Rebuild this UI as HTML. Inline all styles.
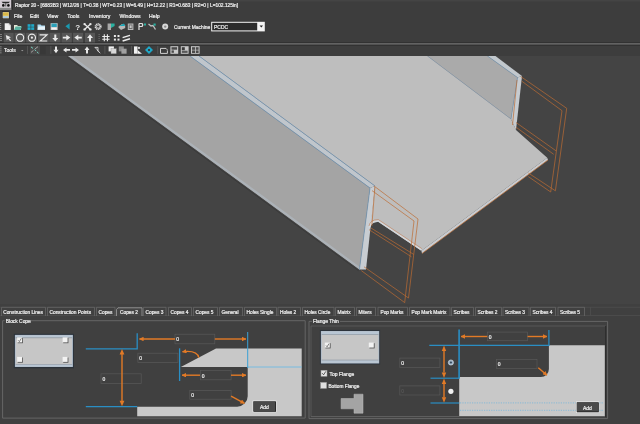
<!DOCTYPE html>
<html><head><meta charset="utf-8"><style>
html,body{margin:0;padding:0}
body{width:640px;height:424px;overflow:hidden;background:#404040;position:relative;font-family:"Liberation Sans",sans-serif}
svg{position:absolute;left:0;top:0;will-change:transform}
text{font-family:"Liberation Sans",sans-serif}
.t{fill:#ededed;stroke:#ededed;stroke-width:0.22}
</style></head><body>
<svg width="640" height="424" viewBox="0 0 640 424">
<defs>
<marker id="ah" viewBox="0 0 10 10" refX="9" refY="5" markerWidth="3.2" markerHeight="3.2" orient="auto-start-reverse"><path d="M0,0 L10,5 L0,10 Z" fill="#e27a26"/></marker>
</defs>
<!-- chrome -->
<rect x="0" y="0" width="640" height="56" fill="#3d3d3d"/>
<rect x="0" y="0" width="640" height="1.5" fill="#444444"/>
<rect x="0" y="42.4" width="640" height="0.9" fill="#2c2c2c"/>
<rect x="0" y="43.3" width="640" height="1.4" fill="#767676"/>
<rect x="0" y="44.7" width="640" height="0.9" fill="#2c2c2c"/>
<!-- title icon -->
<rect x="0" y="0" width="11.5" height="9.5" fill="#d4ccd4"/>
<rect x="0" y="7.8" width="11.5" height="1.7" fill="#8a8a8a"/>
<path d="M1.5,1.8 H10 L8.5,3.2 H3 Z" fill="#2a2a2a"/>
<circle cx="3.3" cy="5.4" r="1.3" fill="#101010"/><circle cx="8.4" cy="5.4" r="1.3" fill="#101010"/>
<rect x="5.2" y="3" width="1.1" height="3.5" fill="#5a5a5a"/>
<rect x="11.5" y="0" width="1" height="9.5" fill="#1a1a1a"/>
<text x="15" y="7" font-size="4.85" class="t">Raptor 20 - [6883B3 | W12/26 | T=0.38 | WT=0.23 | W=6.49 | H=12.22 | R1=0.683 | R2=0 | L=102.125in]</text>
<!-- menu -->
<rect x="2" y="11.5" width="7.5" height="7.5" fill="#1e1e2a"/>
<rect x="2.6" y="12.1" width="6.3" height="6.3" fill="#e8dca0"/>
<rect x="3" y="12.5" width="5.5" height="3.2" fill="#d8b848"/>
<rect x="3" y="16.2" width="5.5" height="1.8" fill="#a8c8e0"/>
<g font-size="5.2" class="t">
<text x="14" y="17.6">File</text><text x="30" y="17.6">Edit</text><text x="47" y="17.6">View</text><text x="67.3" y="17.6">Tools</text><text x="89" y="17.6">Inventory</text><text x="119.5" y="17.6">Windows</text><text x="149" y="17.6">Help</text>
</g>
<!-- toolbar 1 -->
<g fill="#8a8a8a"><rect x="0" y="23" width="1.2" height="1"/><rect x="0" y="25" width="1.2" height="1"/><rect x="0" y="27" width="1.2" height="1"/><rect x="0" y="29" width="1.2" height="1"/></g>
<path d="M4.7,23.2 H8.8 L10.8,25.2 V30 H4.7 Z" fill="#f0f0f0"/><path d="M8.8,23.2 V25.2 H10.8" fill="#b0b0b0"/>
<path d="M14,25 H17 L18,26 H21 V30 H14 Z" fill="#e8e8d8"/><path d="M15.5,26.5 H22 L20.5,30 H14 Z" fill="#5ab0a0"/>
<g fill="#1ea8c8"><rect x="27.6" y="24.2" width="3" height="2.6"/><rect x="31.2" y="24.2" width="3" height="2.6"/><rect x="27.6" y="27.3" width="3" height="2.6"/><rect x="31.2" y="27.3" width="3" height="2.6"/></g>
<path d="M37.5,24.6 H40.5 L41.5,25.6 H45 V29.8 H37.5 Z" fill="#a8d8f0"/><path d="M38.5,26.5 H45 V29.8 H37.5 Z" fill="#e8f4fa"/>
<rect x="50.6" y="23.2" width="7" height="6.8" fill="#d0d0d0"/><rect x="51.4" y="23.6" width="5.4" height="3.4" fill="#2aa0b8"/><rect x="51.6" y="27.8" width="5" height="1.6" fill="#f4f4f4"/>
<path d="M69.6,23.2 V29.5 L65.4,26.35 Z" fill="#1a9ab0"/>
<text x="75.2" y="30" font-size="8" font-weight="bold" fill="#e8e8e8">?</text>
<path d="M85,24.5 L90,29 M90,24.5 L85,29" stroke="#e8e8e8" stroke-width="1.3"/><g fill="#e8e8e8"><circle cx="84.6" cy="24.1" r="1.2"/><circle cx="90.4" cy="24.1" r="1.2"/><circle cx="84.6" cy="29.4" r="1.2"/><circle cx="90.4" cy="29.4" r="1.2"/></g>
<circle cx="98.1" cy="26.6" r="2.7" fill="none" stroke="#e0e0e0" stroke-width="1.6" stroke-dasharray="1.1,0.6"/>
<circle cx="98.1" cy="26.6" r="1.6" fill="none" stroke="#e0e0e0" stroke-width="0.8"/>
<path d="M107.6,23.5 H111 V30 H107.6 Z" fill="#a8a8a8"/><path d="M111,23.5 H114.6 V26 L111,28 Z" fill="#2ab0a0"/>
<path d="M118.1,27 L122,24 L125.2,25 V28 L121,30 Z" fill="#b8b8b8"/><path d="M119,26 L124,23.5 L125,26 Z" fill="#1aa8b8"/>
<rect x="127.8" y="23.5" width="5.6" height="6.5" fill="#b8b8b8"/><rect x="128.8" y="24.5" width="3.6" height="4.5" fill="#6a6a6a"/><rect x="129.6" y="25.4" width="2" height="2.6" fill="#c8c8c8"/>
<path d="M139,23.5 V30 M139,23.5 H142 Q143.5,25 142,26.5 H139" stroke="#e0e0e0" stroke-width="1.2" fill="none"/><rect x="144" y="23.5" width="2" height="2" fill="#2ab0a0"/>
<path d="M148.5,24 L151,26 L153,25.5 L155.5,29.5" stroke="#c0c0c0" stroke-width="1.3" fill="none"/><rect x="153.5" y="23.5" width="2.2" height="2.2" fill="#2ab0a0"/>
<circle cx="165.2" cy="26.6" r="3" fill="#d8d8d8"/><circle cx="165.2" cy="26.6" r="1.2" fill="#8a8a8a"/>
<text x="174" y="28.7" font-size="4.9" class="t">Current Machine</text>
<rect x="211.2" y="21.8" width="53.6" height="9.6" fill="#f4f4f4"/>
<rect x="212.2" y="22.8" width="45" height="7.6" fill="#2c2c2c"/>
<text x="214" y="28.6" font-size="5" class="t">PCDC</text>
<path d="M259.6,25.6 H263 L261.3,27.6 Z" fill="#202020"/>
<!-- toolbar 2 -->
<g fill="#8a8a8a"><rect x="0" y="34" width="2" height="0.9"/><rect x="0" y="36" width="2" height="0.9"/><rect x="0" y="38" width="2" height="0.9"/><rect x="0" y="40" width="2" height="0.9"/></g>
<g fill="#565656">
<rect x="3.8" y="32.8" width="9.8" height="9.6"/><rect x="14.6" y="32.8" width="10.6" height="9.6"/><rect x="26.2" y="32.8" width="10.8" height="9.6"/><rect x="38" y="32.8" width="10.7" height="9.6"/>
<rect x="49.4" y="32.8" width="11" height="9.6"/><rect x="61.6" y="32.8" width="10.2" height="9.6"/><rect x="73.1" y="32.8" width="10" height="9.6"/><rect x="85" y="32.8" width="10" height="9.6"/>
</g>
<path d="M5.8,35 L11,37.2 L9,38 L11.2,40.5 L10.2,41.2 L8,38.8 L6.8,40.6 Z" fill="#e8e8e8"/>
<circle cx="20.1" cy="37.7" r="3.6" fill="none" stroke="#ececec" stroke-width="1.1"/>
<circle cx="31.9" cy="37.7" r="3.6" fill="none" stroke="#ececec" stroke-width="1.1"/><circle cx="31.9" cy="37.7" r="1.1" fill="#ececec"/>
<path d="M39.6,34.9 H47 L40.2,41 H47.2" stroke="#ececec" stroke-width="1.1" fill="none"/>
<path d="M54.3,34.5 H56.3 V38 H58.3 L55.3,41.5 L52.3,38 H54.3 Z" fill="#e8e8e8"/>
<path d="M62.8,36.7 H66.3 V34.7 L70.3,37.6 L66.3,40.5 V38.5 H62.8 Z" fill="#e8e8e8"/>
<path d="M81.8,36.7 H78.3 V34.7 L74.3,37.6 L78.3,40.5 V38.5 H81.8 Z" fill="#e8e8e8"/>
<path d="M89,41.5 H91 V38 H93 L90,34.2 L87,38 H89 Z" fill="#e8e8e8"/>
<g fill="#777"><rect x="98.6" y="34" width="1" height="1"/><rect x="98.6" y="36" width="1" height="1"/><rect x="98.6" y="38" width="1" height="1"/><rect x="98.6" y="40" width="1" height="1"/></g>
<path d="M104.3,34.3 V41.2 M107.4,34.3 V41.2 M102.2,36.5 H109.6 M102.2,39.2 H109.6" stroke="#ececec" stroke-width="1.1"/>
<g fill="#ececec"><rect x="113.9" y="35" width="2" height="2"/><rect x="117.5" y="35" width="2" height="2"/><rect x="113.9" y="38.6" width="2" height="2"/><rect x="117.5" y="38.6" width="2" height="2"/></g>
<path d="M122.6,37.6 L130,35.4 M122.6,41 L130,38.8" stroke="#ececec" stroke-width="1.5"/>
<!-- toolbar 3 -->
<g transform="translate(0,-0.6)">
<g fill="#8a8a8a"><rect x="0" y="47" width="1.6" height="0.9"/><rect x="0" y="49" width="1.6" height="0.9"/><rect x="0" y="51" width="1.6" height="0.9"/><rect x="0" y="53" width="1.6" height="0.9"/></g>
<text x="4" y="52.6" font-size="5" class="t">Tools</text>
<path d="M21,50.5 H23.5 L22.25,51.8 Z" fill="#9a9a9a"/>
<rect x="27" y="46.5" width="0.8" height="8" fill="#5a5a5a"/>
<rect x="30" y="46.3" width="10" height="8.6" fill="#4a4a4a"/>
<path d="M31,47.5 L33,49 M34.5,50.2 L36.2,51.5 M37,52.5 L38.5,53.8" stroke="#7ad0c0" stroke-width="1"/><path d="M31,53 L33.5,51 M35,49.5 L38,47.3" stroke="#b8b8b8" stroke-width="0.8"/>
<rect x="40" y="46.3" width="5.8" height="8.6" fill="#383838"/>
<rect x="50.5" y="46.5" width="0.8" height="8" fill="#5a5a5a"/>
<path d="M55,47 H57 V50.3 H58.5 L56,53.8 L53.5,50.3 H55 Z" fill="#e8e8e8"/>
<path d="M70,49.6 H66.5 V48 L63,50.5 L66.5,53 V51.4 H70 Z" fill="#e8e8e8"/>
<path d="M72,49.6 H75.5 V48 L79,50.5 L75.5,53 V51.4 H72 Z" fill="#e8e8e8"/>
<path d="M86,54 H88 V50.5 H89.5 L87,47 L84.5,50.5 H86 Z" fill="#e8e8e8"/>
<path d="M94.8,48 H98 V51 M100.3,53.8 L97,50.8 M95,48 L98.8,52" stroke="#d8d8d8" stroke-width="0.9" fill="none"/>
<rect x="104.5" y="46.5" width="0.8" height="8" fill="#5a5a5a"/>
<rect x="108.6" y="47" width="5.3" height="5" fill="#f0f0f0"/><rect x="111" y="49.3" width="5.3" height="5" fill="#d8d8d8" stroke="#888" stroke-width="0.4"/>
<rect x="118.8" y="47" width="5" height="5" fill="#8a8a8a"/><rect x="121.4" y="49.3" width="5.2" height="5" fill="#a0a0a0"/>
<rect x="131" y="46.5" width="0.8" height="8" fill="#5a5a5a"/>
<path d="M134,47 H137.5 V54.3 H134 Z" fill="#f0f0f0"/><path d="M137.5,50.5 L142,54.3 H137.5 Z" fill="#f4f4f4"/><rect x="138" y="47.5" width="2" height="2" fill="#ccc"/>
<path d="M149,46.6 L153,50.6 L149,54.6 L145,50.6 Z" fill="#1ea8c8"/><rect x="148" y="49.6" width="2" height="2" fill="#3d3d3d"/>
<rect x="157.4" y="46.5" width="0.8" height="8" fill="#5a5a5a"/>
<path d="M160.5,49 H166 L167.4,50.5 M160.5,49 V54 H167.4 V51" stroke="#d0d0d0" stroke-width="1" fill="none"/>
<rect x="170.4" y="46.8" width="7.8" height="7.6" fill="#c8c8c8"/><rect x="171.5" y="47.8" width="5.6" height="2.5" fill="#4a4a4a"/><rect x="171.5" y="51" width="2.4" height="2.4" fill="#4a4a4a"/>
<rect x="180.8" y="46.8" width="7.8" height="7.6" fill="#c8c8c8"/><rect x="181.8" y="47.8" width="3" height="3" fill="#3a3a3a"/><rect x="181.8" y="51.3" width="5.8" height="2.2" fill="#5a5a5a"/>
<rect x="191" y="46.8" width="8.6" height="7.6" fill="#c8c8c8"/><rect x="192" y="47.8" width="3" height="2.6" fill="#4a4a4a"/><rect x="195.8" y="47.8" width="2.8" height="2.6" fill="#4a4a4a"/><rect x="192" y="51" width="3" height="2.6" fill="#4a4a4a"/><rect x="195.8" y="51" width="2.8" height="2.6" fill="#4a4a4a"/>
</g>
<!-- viewport -->
<clipPath id="vp"><rect x="0" y="56" width="640" height="248"/></clipPath>
<rect x="0" y="56" width="640" height="248" fill="#444444"/>
<g clip-path="url(#vp)">
<!-- near flange outer face -->
<polygon points="68,56 190,56 370,188 359.4,269.6" fill="#a4a4a4"/>
<line x1="67.2" y1="57.1" x2="358.6" y2="270.7" stroke="#3a3a3a" stroke-width="1"/>
<line x1="68.9" y1="55" x2="360.3" y2="268.6" stroke="#acb2b8" stroke-width="2.2"/>
<!-- web face -->
<path d="M199,56 H427.5 L511,119 L516,130 L547.2,157.7 L421.4,250.8 L378.5,222 Q371,221.5 369.6,229 L375,186 Z" fill="#bebebe"/>
<!-- far flange inner -->
<polygon points="427.5,56 487.5,56 517.5,77.5 511,119" fill="#aaaaaa"/>
<polygon points="487.5,56 495.5,56 522,76 517.5,77.5" fill="#c2c8cd"/>
<polygon points="517.5,77.5 522,76 516,130 511,119" fill="#c6cbd0"/>
<line x1="427.5" y1="56" x2="511" y2="119" stroke="#8aa0b5" stroke-width="0.6"/>
<line x1="487.5" y1="56" x2="517.5" y2="77.5" stroke="#6f93b3" stroke-width="0.6"/>
<line x1="517.5" y1="77.5" x2="511" y2="119" stroke="#6f93b3" stroke-width="0.6"/>
<!-- near flange strips -->
<polygon points="190,56 199,56 375,186 370,188" fill="#c0c6cc"/>
<line x1="190" y1="56" x2="370" y2="188" stroke="#6a90b2" stroke-width="0.7"/>
<line x1="199" y1="56" x2="375" y2="186" stroke="#6a90b2" stroke-width="0.7"/>
<polygon points="370,188 375,186 366,269.6 359.4,269.6" fill="#c8cdd2"/>
<line x1="370" y1="188" x2="359.4" y2="269.6" stroke="#6a90b2" stroke-width="0.7"/>
<!-- cope edge strip -->
<path d="M369.4,227.6 Q370.6,220.6 378.3,220.8 L421.4,249.8" fill="none" stroke="#d4d8dc" stroke-width="1.8"/>
<path d="M369,226 Q370,219.6 378.3,219.6 L421.8,248.6" fill="none" stroke="#c07040" stroke-width="0.5"/>
<!-- web front edge -->
<polygon points="421.4,250.8 547.2,157.7 548,160 422,253.5" fill="#c9ccd0"/>
<!-- orange wireframes -->
<g stroke="#bd6c32" stroke-width="0.7" fill="none">
<polyline points="374,186 418,219 408.5,298"/>
<polyline points="372,190.6 414,221 404.7,302.6"/>
<line x1="364" y1="266.8" x2="408.5" y2="298"/>
<line x1="361.3" y1="270.6" x2="404.7" y2="302.6"/>
<line x1="369.1" y1="229.7" x2="411.5" y2="256.8"/>
<line x1="370.8" y1="227.9" x2="413.9" y2="254.5"/>
<line x1="374.9" y1="187" x2="371.8" y2="226"/>
<line x1="422" y1="253.5" x2="548" y2="160"/>
<polyline points="520.7,76.5 566.7,108.3 555.4,190.8"/>
<polyline points="521.8,81.2 562,110.7 550.7,192"/>
<line x1="516" y1="122.5" x2="556" y2="150.8"/>
<line x1="516" y1="127.2" x2="553.7" y2="154.3"/>
<line x1="517" y1="80" x2="512.5" y2="125"/>
<line x1="528.3" y1="173" x2="555.4" y2="190.8"/>
<line x1="528.3" y1="176.6" x2="550.7" y2="192"/>
</g>
</g>
<!-- bottom panel -->
<rect x="0" y="304" width="640" height="120" fill="#404040"/>
<!-- tabs -->
<rect x="0" y="306.8" width="640" height="0.8" fill="#4e4e4e"/>
<rect x="0" y="315.2" width="640" height="0.8" fill="#4e4e4e"/>
<rect x="590" y="307" width="0.8" height="8.5" fill="#4e4e4e"/>
<g fill="none" stroke="#666666" stroke-width="0.8">
<path d="M1.5,316 V307.3 H45.5 V316"/>
<path d="M47.5,316 V307.3 H94.5 V316"/>
<path d="M96.5,316 V307.3 H115 V316"/>
<path d="M143.5,316 V307.3 H166 V316"/>
<path d="M168.5,316 V307.3 H191.5 V316"/>
<path d="M193.5,316 V307.3 H217.5 V316"/>
<path d="M219.5,316 V307.3 H242.5 V316"/>
<path d="M244.5,316 V307.3 H276.5 V316"/>
<path d="M278,316 V307.3 H300.5 V316"/>
<path d="M302.5,316 V307.3 H334 V316"/>
<path d="M335.5,316 V307.3 H354.5 V316"/>
<path d="M356.5,316 V307.3 H375.5 V316"/>
<path d="M378,316 V307.3 H407.5 V316"/>
<path d="M409.5,316 V307.3 H450 V316"/>
<path d="M451.5,316 V307.3 H473.5 V316"/>
<path d="M475.5,316 V307.3 H501.5 V316"/>
<path d="M503,316 V307.3 H529 V316"/>
<path d="M530.5,316 V307.3 H555.5 V316"/>
<path d="M558,316 V307.3 H584.5 V316"/>
</g>
<path d="M116.5,316 V309.5 L118,307.8 H142 V316" fill="#454545" stroke="#a0a0a0" stroke-width="0.8"/>
<g font-size="4.8" class="t">
<text x="3.2" y="313.7">Construction Lines</text>
<text x="49.5" y="313.7">Construction Points</text>
<text x="98.5" y="313.7">Copes</text>
<text x="120" y="313.7">Copes 2</text>
<text x="145.5" y="313.7">Copes 3</text>
<text x="170.5" y="313.7">Copes 4</text>
<text x="195.5" y="313.7">Copes 5</text>
<text x="221.5" y="313.7">General</text>
<text x="246.5" y="313.7">Holes Single</text>
<text x="280" y="313.7">Holes 2</text>
<text x="304.5" y="313.7">Holes Circle</text>
<text x="337.5" y="313.7">Matrix</text>
<text x="358.5" y="313.7">Miters</text>
<text x="380.5" y="313.7">Pop Marks</text>
<text x="411.5" y="313.7">Pop Mark Matrix</text>
<text x="453.5" y="313.7">Scribes</text>
<text x="477.5" y="313.7">Scribes 2</text>
<text x="505" y="313.7">Scribes 3</text>
<text x="532.5" y="313.7">Scribes 4</text>
<text x="560" y="313.7">Scribes 5</text>
</g>
<!-- group boxes -->
<g fill="none" stroke="#6a6a6a" stroke-width="0.9">
<path d="M4.5,320.7 H2.6 V418.1 H305.2 V320.7 H31"/>
<path d="M312,321.4 H309 V418.6 H607.6 V321.4 H340"/>
</g>
<path d="M311,416.6 V326 H605.5" fill="none" stroke="#5e5e5e" stroke-width="0.8"/>
<path d="M311,416.6 H605.5" fill="none" stroke="#6a6a6a" stroke-width="0.8"/>
<path d="M605.6,326 V417" fill="none" stroke="#2e2e2e" stroke-width="1.2"/>
<text x="5.8" y="323" font-size="4.9" class="t">Block Cope</text>
<text x="313" y="323.1" font-size="4.9" class="t">Flange Thin</text>
<!-- Block cope widget -->
<rect x="13.8" y="333.8" width="60.2" height="34.5" fill="#2c333b"/>
<rect x="14.9" y="334.9" width="58" height="32.1" fill="#a9bacb"/>
<rect x="15.6" y="335.6" width="56.6" height="30.7" fill="#c6c6c6"/>
<rect x="15.6" y="335.6" width="56.6" height="1.8" fill="#b8c6d4"/>
<rect x="15.6" y="337.4" width="56.6" height="0.8" fill="#8f9aa5"/>
<rect x="15.6" y="364.6" width="56.6" height="1.7" fill="#b8c6d4"/>
<rect x="15.6" y="364.2" width="56.6" height="0.6" fill="#8f9aa5"/>
<rect x="17.7" y="338.0" width="5.2" height="5.2" fill="#505050"/><rect x="17.1" y="337.4" width="5" height="5" fill="#f2f2f2"/><rect x="63.2" y="338.0" width="5.2" height="5.2" fill="#505050"/><rect x="62.6" y="337.4" width="5" height="5" fill="#f2f2f2"/>
<rect x="17.7" y="357.5" width="5.2" height="5.2" fill="#505050"/><rect x="17.1" y="356.9" width="5" height="5" fill="#f2f2f2"/><rect x="63.2" y="357.5" width="5.2" height="5.2" fill="#505050"/><rect x="62.6" y="356.9" width="5" height="5" fill="#f2f2f2"/>
<path d="M18.2,340.3 L19.4,341.6 L21.3,338.4" fill="none" stroke="#333" stroke-width="0.6"/>
<!-- Block cope diagram -->
<path d="M137.2,406.7 H237.2 A10.5,10.5 0 0 0 247.7,396.2 V367 H180.8 L216,348.4 H301.7 V416.2 H137.2 Z" fill="#c8c8c8"/>
<g stroke="#2a8ec4" stroke-width="1.3" fill="none">
<path d="M85.8,348.8 H137.2 V333.2"/>
<path d="M85.8,406.7 H137.2"/>
</g>
<line x1="248" y1="367" x2="301.7" y2="367" stroke="#62b8e6" stroke-width="0.8"/>
<line x1="247.7" y1="332" x2="247.7" y2="368" stroke="#3aa0d4" stroke-width="1"/>
<line x1="179.6" y1="348.3" x2="179.6" y2="381" stroke="#2a8ec4" stroke-width="1.3"/>
<g fill="none" stroke="#585858" stroke-width="0.7">
<rect x="175" y="334.2" width="39.8" height="9.6"/>
<rect x="137.9" y="353.2" width="40" height="9.2"/>
<rect x="101" y="373.8" width="40.2" height="9.6"/>
<rect x="200.3" y="370.6" width="30.8" height="9.2"/>
<rect x="189.8" y="390.4" width="41.3" height="8.8"/>
</g>
<g stroke="#e27a26" stroke-width="1.4" fill="none">
<line x1="122" y1="353" x2="122" y2="402"/>
<line x1="175" y1="339" x2="139.5" y2="339" marker-end="url(#ah)"/>
<line x1="214.8" y1="339" x2="246" y2="339" marker-end="url(#ah)"/>
<line x1="200" y1="375.2" x2="182" y2="375.2" marker-end="url(#ah)"/>
<line x1="231" y1="375.2" x2="246" y2="375.2" marker-end="url(#ah)"/>
<line x1="231.1" y1="396.2" x2="244.5" y2="403.4" marker-end="url(#ah)"/>
<path d="M198.8,357.6 C197.8,352.6 192,350.6 182.5,351.7" marker-end="url(#ah)"/>
</g>
<path d="M122,349 L119.6,354.5 H124.4 Z M122,406.3 L119.6,400.8 H124.4 Z" fill="#e27a26"/>
<g font-size="5" class="t">
<text x="176.3" y="341.3">0</text><text x="139.3" y="360">0</text><text x="102.4" y="380.7">0</text><text x="201.8" y="377.5">0</text><text x="191.3" y="396.8">0</text>
</g>
<rect x="252.6" y="400.6" width="23.8" height="11.6" fill="#f0f0f0"/>
<rect x="253.4" y="401.4" width="22.6" height="10.4" fill="#1e1e1e"/>
<rect x="253.4" y="401.4" width="21.8" height="9.6" fill="#4a4a4a"/>
<text x="260" y="408.6" font-size="5" class="t">Add</text>
<!-- Flange thin widget -->
<rect x="319.9" y="329.9" width="60.2" height="34.5" fill="#2c333b"/>
<rect x="320.9" y="331" width="58.3" height="32.5" fill="#a9bacb"/>
<rect x="321.6" y="331.7" width="56.9" height="31.1" fill="#c6c6c6"/>
<rect x="321.6" y="331.7" width="56.9" height="2.8" fill="#b8c6d4"/>
<rect x="321.6" y="334.3" width="56.9" height="0.7" fill="#8f9aa5"/>
<rect x="321.6" y="360.2" width="56.9" height="2.6" fill="#b8c6d4"/>
<rect x="321.6" y="359.7" width="56.9" height="0.7" fill="#8f9aa5"/>
<rect x="325.4" y="343.2" width="5.2" height="5.2" fill="#505050"/><rect x="324.8" y="342.6" width="5" height="5" fill="#f2f2f2"/><rect x="369.4" y="343.2" width="5.2" height="5.2" fill="#505050"/><rect x="368.8" y="342.6" width="5" height="5" fill="#f2f2f2"/>
<path d="M326,345.5 L327.1,346.8 L329,343.6" fill="none" stroke="#333" stroke-width="0.6"/>
<rect x="321" y="370.3" width="6" height="6" fill="#e4e4e4" stroke="#999" stroke-width="0.5"/>
<path d="M322.2,373.2 L323.6,374.8 L325.8,371.4" fill="none" stroke="#222" stroke-width="0.7"/>
<rect x="320.6" y="382.4" width="6" height="6" fill="#e0e0e0" stroke="#999" stroke-width="0.5"/>
<text x="329.6" y="376" font-size="5" class="t">Top Flange</text>
<text x="328.4" y="388.2" font-size="4.75" class="t">Bottom Flange</text>
<path d="M341.1,398.5 H354 V394.2 H363 V413.2 H354 V408.8 H341.1 Z" fill="#a4a4a4" stroke="#bdbdbd" stroke-width="0.5"/>
<!-- Flange thin diagram -->
<path d="M459.2,345.2 H548.9 V369.1 A8,8 0 0 1 540.9,377.1 H459.2 V416 H604.8 V345.2 Z" fill="#c8c8c8"/>
<g stroke="#2a8ec4" stroke-width="1.2" fill="none">
<line x1="429.3" y1="345.3" x2="549.5" y2="345.3"/>
<line x1="430.5" y1="378.2" x2="459.2" y2="378.2"/>
<line x1="430.5" y1="403" x2="459.2" y2="403"/>
<line x1="459.1" y1="329.5" x2="459.1" y2="378.5" stroke-width="1.6"/>
<line x1="548.9" y1="330" x2="548.9" y2="345.3"/>
</g>
<g stroke="#5aaee0" stroke-width="0.6" stroke-dasharray="1.2,1.2" fill="none">
<line x1="460" y1="402.9" x2="604" y2="402.9"/>
<line x1="460" y1="410.3" x2="604" y2="410.3"/>
</g>
<g fill="none" stroke="#585858" stroke-width="0.7">
<rect x="487.3" y="332.1" width="40.3" height="8.6"/>
<rect x="496.3" y="359.4" width="40.7" height="9.2"/>
<rect x="399.8" y="358.1" width="40.1" height="9.3"/>
<rect x="399.8" y="385.9" width="40.1" height="9.1"/>
</g>
<g stroke="#e27a26" stroke-width="1.4" fill="none">
<line x1="487.3" y1="336.5" x2="461" y2="336.5" marker-end="url(#ah)"/>
<line x1="527.6" y1="336.5" x2="547" y2="336.5" marker-end="url(#ah)"/>
<line x1="538.3" y1="367.8" x2="547" y2="375.3" marker-end="url(#ah)"/>
<line x1="444" y1="351" x2="444" y2="372.5"/>
<line x1="444" y1="384" x2="444" y2="397.5"/>
</g>
<path d="M444,345.6 L441.8,351 H446.2 Z M444,377.9 L441.8,372.5 H446.2 Z M444,378.6 L441.8,384 H446.2 Z M444,402.7 L441.8,397.3 H446.2 Z" fill="#e27a26"/>
<g font-size="5" class="t">
<text x="488.8" y="338.6">0</text><text x="497.8" y="366">0</text><text x="401.3" y="364.7">0</text>
</g>
<text x="401.3" y="392.5" font-size="5" fill="#5e5e5e">0</text>
<circle cx="450.9" cy="362.5" r="2.6" fill="#9ab0c4" stroke="#d8e0e8" stroke-width="0.6"/>
<circle cx="450.9" cy="362.5" r="1.1" fill="#3a4a5a"/>
<circle cx="450.9" cy="391.3" r="2.6" fill="#f0f0f0"/>
<rect x="576" y="401.5" width="23.2" height="11.5" fill="#f0f0f0"/>
<rect x="576.8" y="402.3" width="22" height="10" fill="#1e1e1e"/>
<rect x="576.8" y="402.3" width="21.2" height="9.2" fill="#4a4a4a"/>
<text x="583" y="409.6" font-size="5" class="t">Add</text>
</svg>
</body></html>
